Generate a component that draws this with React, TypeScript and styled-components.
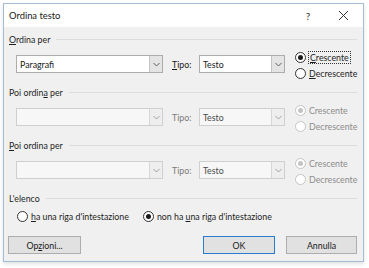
import React from 'react';
import styled, { createGlobalStyle } from 'styled-components';

const GlobalStyle = createGlobalStyle`
  html, body {
    margin: 0;
    padding: 0;
    background: #ffffff;
  }
  body {
    font-family: Lato, "Noto Sans", sans-serif;
    font-size: 8.8px;
    color: #1e1e1e;
  }
`;

const Page = styled.div`
  width: 369px;
  height: 268px;
  padding: 3px 0 0 3px;
  box-sizing: border-box;
`;

const Dialog = styled.div`
  width: 361px;
  border: 1px solid #a5bcd6;
  box-sizing: border-box;
  background: #f0f0f0;
  box-shadow: 0 2px 4px rgba(0, 0, 0, 0.12);
`;

const TitleBar = styled.div`
  height: 23px;
  background: #ffffff;
  display: flex;
  align-items: center;
  padding-left: 5px;
`;

const Title = styled.div`
  flex: 1;
  font-size: 9.4px;
  color: #1a1a1a;
`;

const TitleButton = styled.div<{ $w: number }>`
  width: ${p => p.$w}px;
  display: flex;
  justify-content: center;
  align-items: center;
  font-size: 10px;
  color: #333;
`;

const Body = styled.div`
  padding: 5px 6px 7px 5px;
  display: flex;
  flex-direction: column;
`;

const SectionLabel = styled.div<{ $gap?: number }>`
  height: 14px;
  display: flex;
  align-items: center;
  gap: 6px;
  margin-top: ${p => p.$gap ?? 0}px;
  &::after {
    content: '';
    flex: 1;
    height: 1px;
    background: #dcdcdc;
  }
`;

const U = styled.span`
  text-decoration: underline;
  text-underline-offset: 1px;
`;

const SortRow = styled.div`
  height: 32px;
  margin-top: 3px;
  padding-left: 7px;
  display: flex;
  align-items: flex-start;
`;

const Combo = styled.div<{ $w: number; $disabled?: boolean }>`
  width: ${p => p.$w}px;
  flex-shrink: 0;
  height: 18px;
  margin-top: 6px;
  box-sizing: border-box;
  border: 1px solid ${p => (p.$disabled ? '#cfcfcf' : '#acacac')};
  background: ${p => (p.$disabled ? '#f7f7f7' : '#ffffff')};
  display: flex;
  align-items: stretch;
`;

const ComboText = styled.div<{ $disabled?: boolean }>`
  flex: 1;
  display: flex;
  align-items: center;
  padding-left: 3px;
  color: ${p => (p.$disabled ? '#4a4a4a' : '#1a1a1a')};
`;

const ComboButton = styled.div<{ $disabled?: boolean }>`
  width: 12px;
  border-left: 1px solid ${p => (p.$disabled ? '#d6d6d6' : '#c4c4c4')};
  background: ${p => (p.$disabled ? '#eeeeee' : '#e4e4e4')};
  display: flex;
  align-items: center;
  justify-content: center;
`;

const TipoLabel = styled.div<{ $disabled?: boolean }>`
  width: 18px;
  flex-shrink: 0;
  margin: 6px 9px 0 9px;
  height: 18px;
  display: flex;
  align-items: center;
  white-space: nowrap;
  color: ${p => (p.$disabled ? '#7a7a7a' : '#1a1a1a')};
`;

const RadioGroup = styled.div`
  margin-left: 10px;
  display: flex;
  flex-direction: column;
  white-space: nowrap;
`;

const RadioLine = styled.div<{ $disabled?: boolean; $gap?: number }>`
  height: 16px;
  display: flex;
  align-items: center;
  gap: 3px;
  white-space: nowrap;
  margin-right: ${p => p.$gap ?? 0}px;
  color: ${p => (p.$disabled ? '#8c8c8c' : '#1e1e1e')};
`;

const RadioCircle = styled.div<{ $checked?: boolean; $disabled?: boolean }>`
  width: 11px;
  height: 11px;
  flex-shrink: 0;
  box-sizing: border-box;
  border-radius: 50%;
  border: 1px solid ${p => (p.$disabled ? '#c4c4c4' : '#333333')};
  background: #ffffff;
  display: flex;
  align-items: center;
  justify-content: center;
  &::after {
    content: '';
    display: ${p => (p.$checked ? 'block' : 'none')};
    width: 5px;
    height: 5px;
    border-radius: 50%;
    background: ${p => (p.$disabled ? '#c4c4c4' : '#1a1a1a')};
  }
`;

const Focus = styled.span`
  outline: 1px dotted #333;
  outline-offset: 0px;
  padding: 0 1px;
`;

const ListRow = styled.div`
  margin-top: 3px;
  padding-left: 8px;
  display: flex;
`;

const ButtonRow = styled.div`
  margin-top: 12px;
  margin-left: -1px;
  display: flex;
  justify-content: space-between;
`;

const ButtonGroup = styled.div`
  display: flex;
  gap: 11px;
`;

const Button = styled.div<{ $w: number; $primary?: boolean }>`
  width: ${p => p.$w}px;
  height: 18px;
  box-sizing: border-box;
  background: #e1e1e1;
  border: 1px solid ${p => (p.$primary ? '#2a7bd1' : '#adadad')};
  display: flex;
  align-items: center;
  justify-content: center;
  color: #1a1a1a;
`;

const Chevron = ({ disabled }: { disabled?: boolean }) => (
  <svg width="7" height="5" viewBox="0 0 7 5">
    <path d="M0.5 1 L3.5 4 L6.5 1" fill="none" stroke={disabled ? '#a0a0a0' : '#606060'} strokeWidth="1" />
  </svg>
);

interface SortProps {
  label: React.ReactNode;
  field?: string;
  disabled?: boolean;
  gap?: number;
}

const SortSection: React.FC<SortProps> = ({ label, field, disabled, gap }) => (
  <>
    <SectionLabel $gap={gap}>{label}</SectionLabel>
    <SortRow>
      <Combo $w={147} $disabled={disabled}>
        <ComboText $disabled={disabled}>{field}</ComboText>
        <ComboButton $disabled={disabled}><Chevron disabled={disabled} /></ComboButton>
      </Combo>
      <TipoLabel $disabled={disabled}>{disabled ? 'Tipo:' : <span><U>T</U>ipo:</span>}</TipoLabel>
      <Combo $w={86} $disabled={disabled}>
        <ComboText $disabled={disabled}>Testo</ComboText>
        <ComboButton $disabled={disabled}><Chevron disabled={disabled} /></ComboButton>
      </Combo>
      <RadioGroup>
        <RadioLine $disabled={disabled}>
          <RadioCircle $checked $disabled={disabled} />
          {disabled ? <span>Crescente</span> : <Focus><U>C</U>rescente</Focus>}
        </RadioLine>
        <RadioLine $disabled={disabled}>
          <RadioCircle $disabled={disabled} />
          {disabled ? <span>Decrescente</span> : <span><U>D</U>ecrescente</span>}
        </RadioLine>
      </RadioGroup>
    </SortRow>
  </>
);

export default function App() {
  return (
    <Page>
      <GlobalStyle />
      <Dialog>
        <TitleBar>
          <Title>Ordina testo</Title>
          <TitleButton $w={30}>?</TitleButton>
          <TitleButton $w={40}>
            <svg width="11" height="11" viewBox="0 0 11 11">
              <path d="M1 1 L10 10 M10 1 L1 10" stroke="#333" strokeWidth="1" />
            </svg>
          </TitleButton>
        </TitleBar>
        <Body>
          <SortSection label={<span><U>O</U>rdina per</span>} field="Paragrafi" />
          <SortSection label={<span>Poi ordin<U>a</U> per</span>} disabled gap={4} />
          <SortSection label={<span><U>P</U>oi ordina per</span>} disabled gap={4} />
          <SectionLabel $gap={4}>L'elenco</SectionLabel>
          <ListRow>
            <RadioLine $gap={14}>
              <RadioCircle />
              <span><U>h</U>a una riga d'intestazione</span>
            </RadioLine>
            <RadioLine>
              <RadioCircle $checked />
              <span>non ha <U>u</U>na riga d'intestazione</span>
            </RadioLine>
          </ListRow>
          <ButtonRow>
            <Button $w={73}><span>Op<U>z</U>ioni...</span></Button>
            <ButtonGroup>
              <Button $w={72} $primary>OK</Button>
              <Button $w={71}>Annulla</Button>
            </ButtonGroup>
          </ButtonRow>
        </Body>
      </Dialog>
    </Page>
  );
}
